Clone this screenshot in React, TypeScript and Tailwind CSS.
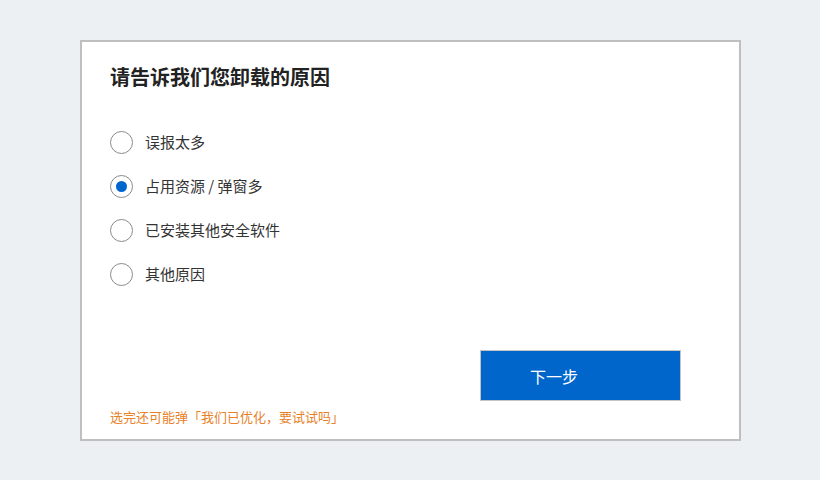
import React, { useState } from "react";

const options = ["误报太多", "占用资源 / 弹窗多", "已安装其他安全软件", "其他原因"];

export default function App() {
  const [selected, setSelected] = useState(1);
  return (
    <div
      className="w-[820px] h-[480px] bg-[#edf0f3] pt-[40px] pl-[80px]"
      style={{ fontFamily: '"Noto Sans CJK SC", "Noto Sans", sans-serif' }}
    >
      <div className="w-[661px] h-[401px] bg-white border-2 border-[#bfbfbf] flex flex-col pl-[28px]">
        <h1 className="mt-[21px] text-[20px] leading-[28px] font-bold text-[#222]">
          请告诉我们您卸载的原因
        </h1>
        <div className="mt-[29px] flex flex-col">
          {options.map((o, i) => (
            <label
              key={o}
              className="h-[44px] flex items-center gap-[12px] cursor-pointer"
              onClick={() => setSelected(i)}
            >
              <span className="w-[23px] h-[23px] rounded-full border border-[#8a8a8a] flex items-center justify-center bg-white">
                {selected === i && (
                  <span className="w-[11px] h-[11px] rounded-full bg-[#0066cc]" />
                )}
              </span>
              <span className="text-[15px] leading-[20px] text-[#333]">{o}</span>
            </label>
          ))}
        </div>
        <div className="mt-[54px] flex justify-end pr-[58px]">
          <button className="w-[201px] h-[51px] bg-[#0066cc] border border-[#c4c4c4] text-white text-[16px] leading-[22px] text-left pl-[49px]">
            下一步
          </button>
        </div>
        <p className="mt-[7px] text-[13px] leading-[18px] text-[#e8822a]">
          选完还可能弹「我们已优化，要试试吗」
        </p>
      </div>
    </div>
  );
}
